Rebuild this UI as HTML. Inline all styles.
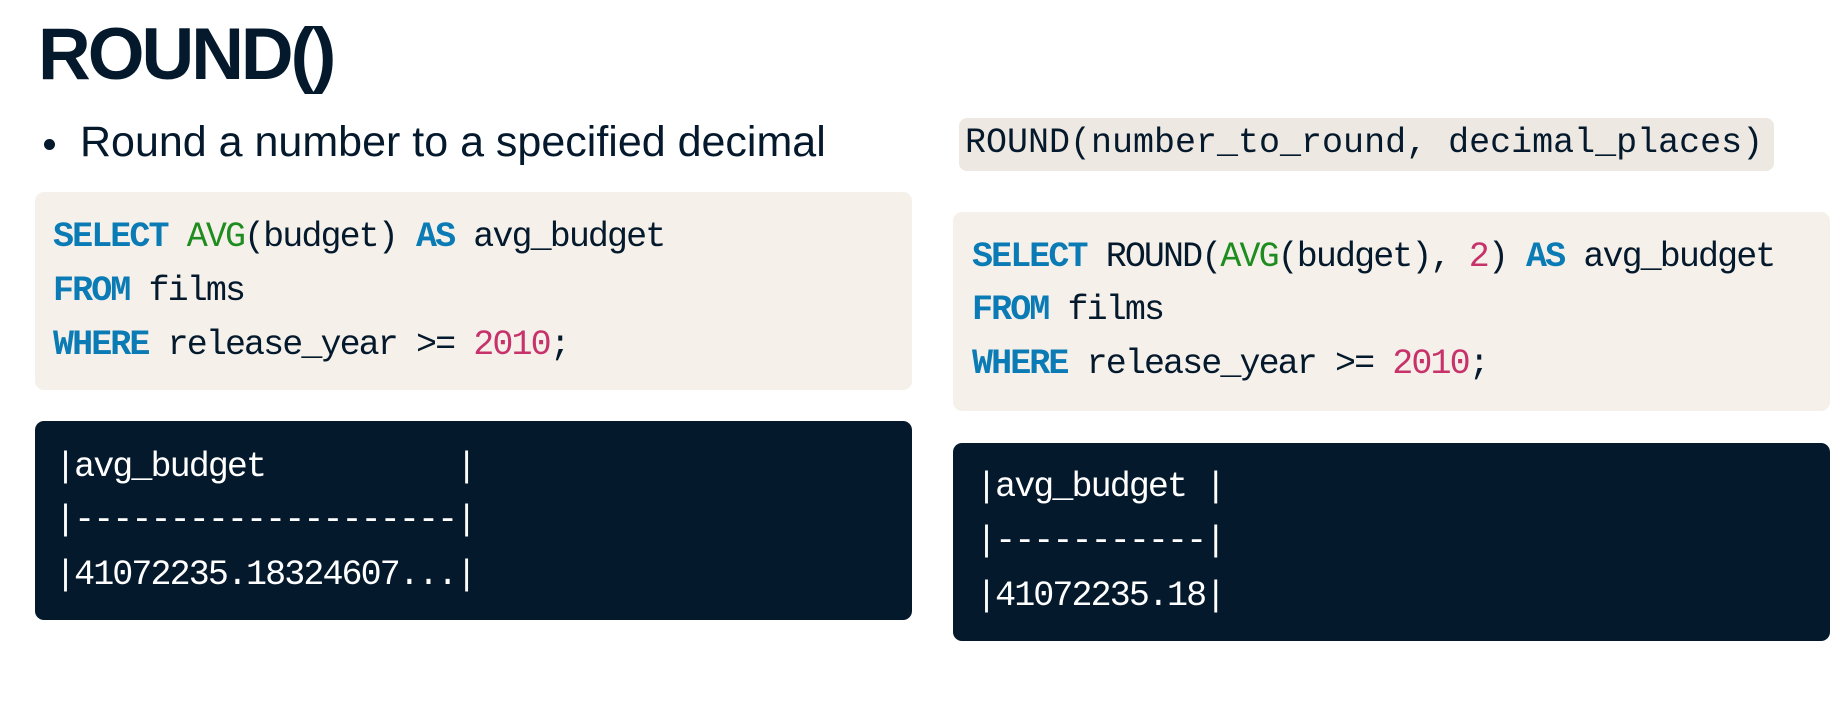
<!DOCTYPE html>
<html><head><meta charset="utf-8"><style>
html,body{margin:0;padding:0;background:#fff;width:1846px;height:716px;overflow:hidden;position:relative}
.a{position:absolute;white-space:pre}
.t{font-family:"Liberation Sans",sans-serif;font-weight:bold;font-size:73px;letter-spacing:-3px;color:#05192d;line-height:1.117}
.b{font-family:"Liberation Sans",sans-serif;font-size:43px;color:#05192d;line-height:1.117}
.m{font-family:"Liberation Mono",monospace;font-size:35px;letter-spacing:-1.9px;line-height:1.133;color:#05192d}
.w{color:#fff}
.box{position:absolute;border-radius:9px}
.k{color:#0b7bb5;font-weight:bold}
.g{color:#1f8c1f}
.p{color:#c7326b}
</style></head><body>
<div class="a t" style="left:38px;top:14px">ROUND()</div>
<div style="position:absolute;left:44px;top:139px;width:11px;height:11px;border-radius:50%;background:#05192d"></div>
<div class="a b" style="left:80px;top:118px">Round a number to a specified decimal</div>

<div class="box" style="left:35px;top:192px;width:877px;height:198px;background:#f5f1ea"></div>
<div class="a m" style="left:53px;top:218px"><span class="k">SELECT</span> <span class="g">AVG</span>(budget) <span class="k">AS</span> avg_budget</div>
<div class="a m" style="left:53px;top:272px"><span class="k">FROM</span> films</div>
<div class="a m" style="left:53px;top:326px"><span class="k">WHERE</span> release_year &gt;= <span class="p">2010</span>;</div>

<div class="box" style="left:35px;top:421px;width:877px;height:199px;background:#05192d"></div>
<div class="a m w" style="left:55px;top:448px">|avg_budget          |</div>
<div class="a m w" style="left:55px;top:501px">|--------------------|</div>
<div class="a m w" style="left:55px;top:556px">|41072235.18324607...|</div>

<div class="box" style="left:959px;top:118px;width:815px;height:53px;background:#ede8e1;border-radius:8px"></div>
<div class="a m" style="left:965px;top:124px;letter-spacing:0">ROUND(number_to_round, decimal_places)</div>

<div class="box" style="left:953px;top:212px;width:877px;height:199px;background:#f5f1ea"></div>
<div class="a m" style="left:972px;top:238px"><span class="k">SELECT</span> ROUND(<span class="g">AVG</span>(budget), <span class="p">2</span>) <span class="k">AS</span> avg_budget</div>
<div class="a m" style="left:972px;top:291px"><span class="k">FROM</span> films</div>
<div class="a m" style="left:972px;top:345px"><span class="k">WHERE</span> release_year &gt;= <span class="p">2010</span>;</div>

<div class="box" style="left:953px;top:443px;width:877px;height:198px;background:#05192d"></div>
<div class="a m w" style="left:976px;top:468px">|avg_budget |</div>
<div class="a m w" style="left:976px;top:522px">|-----------|</div>
<div class="a m w" style="left:976px;top:577px">|41072235.18|</div>
</body></html>
